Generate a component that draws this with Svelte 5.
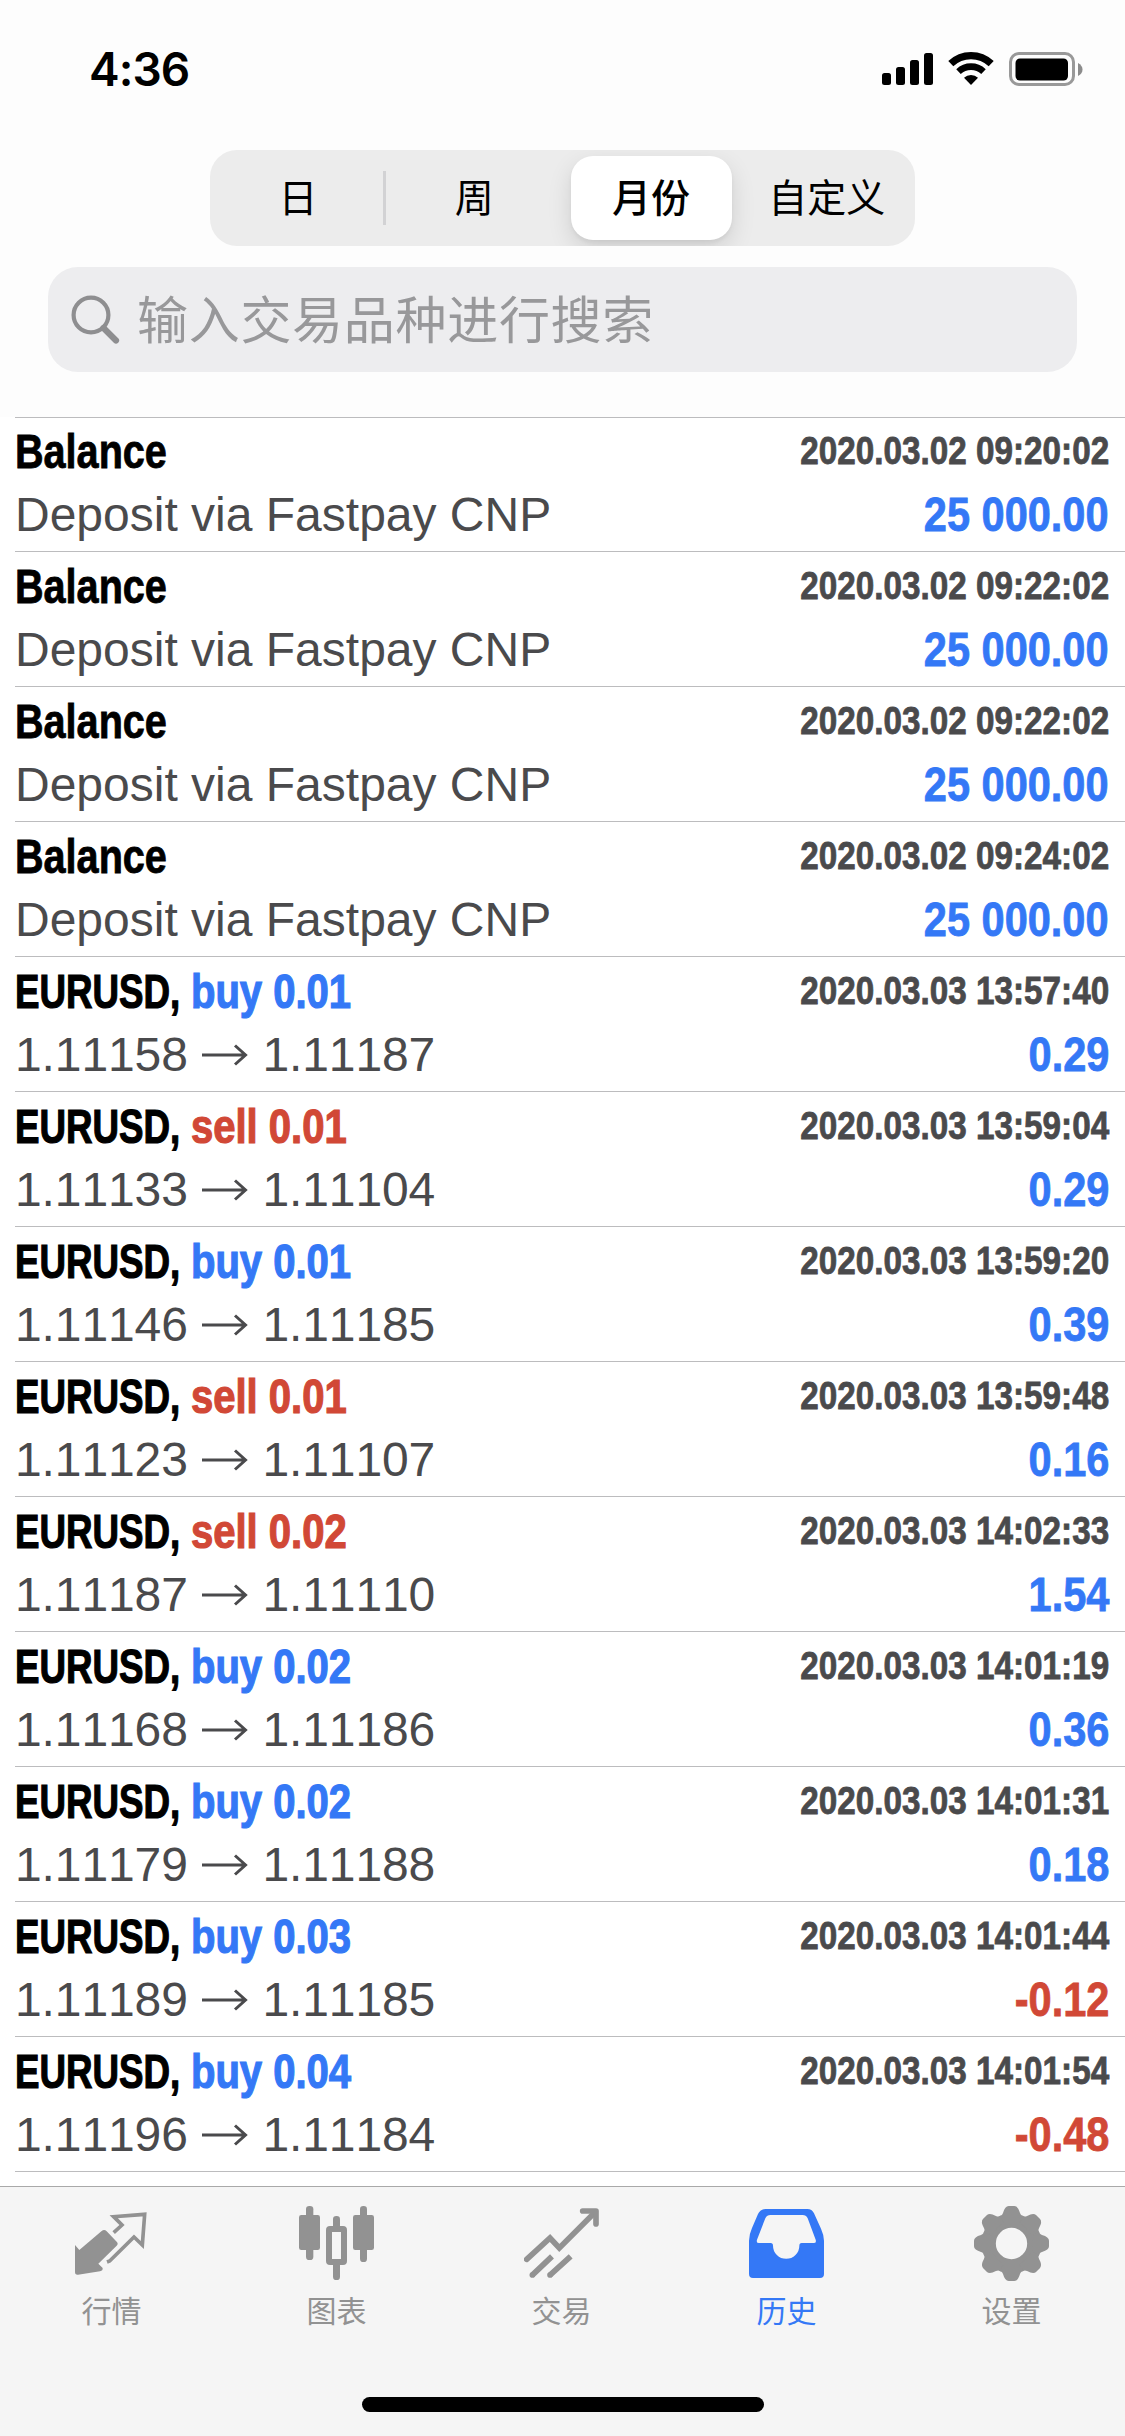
<script lang="ts">
  type Row = { symbol: string; side?: string; lots?: string; from?: string; to?: string; note?: string; time: string; amount: string };

  const deposit = (time: string): Row => ({
    symbol: 'Balance',
    note: 'Deposit via Fastpay CNP',
    time: `2020.03.02 ${time}`,
    amount: '25 000.00',
  });
  const deal = (side: string, lots: string, from: string, to: string, time: string, amount: string): Row => ({
    symbol: 'EURUSD,',
    side,
    lots,
    from,
    to,
    time: `2020.03.03 ${time}`,
    amount,
  });

  const rows: Row[] = [
    deposit('09:20:02'),
    deposit('09:22:02'),
    deposit('09:22:02'),
    deposit('09:24:02'),
    deal('buy', '0.01', '1.11158', '1.11187', '13:57:40', '0.29'),
    deal('sell', '0.01', '1.11133', '1.11104', '13:59:04', '0.29'),
    deal('buy', '0.01', '1.11146', '1.11185', '13:59:20', '0.39'),
    deal('sell', '0.01', '1.11123', '1.11107', '13:59:48', '0.16'),
    deal('sell', '0.02', '1.11187', '1.11110', '14:02:33', '1.54'),
    deal('buy', '0.02', '1.11168', '1.11186', '14:01:19', '0.36'),
    deal('buy', '0.02', '1.11179', '1.11188', '14:01:31', '0.18'),
    deal('buy', '0.03', '1.11189', '1.11185', '14:01:44', '-0.12'),
    deal('buy', '0.04', '1.11196', '1.11184', '14:01:54', '-0.48'),
  ];

  const periods = ['日', '周', '月份', '自定义'];
  const teeth = [0, 45, 90, 135, 180, 225, 270, 315];
  const tabs = [
    { id: 'quotes', label: '行情' },
    { id: 'chart', label: '图表' },
    { id: 'trade', label: '交易' },
    { id: 'history', label: '历史' },
    { id: 'settings', label: '设置' },
  ];

  let period = $state('月份');
  let tab = $state('history');
</script>

<div class="screen">
  <header class="status">
    <span class="clock">4:36</span>
    <svg class="indicators" width="202" height="36" viewBox="0 0 202 36" aria-hidden="true">
      <rect x="1" y="22" width="9" height="12" rx="2.5" />
      <rect x="15" y="16" width="9" height="18" rx="2.5" />
      <rect x="29" y="9" width="9" height="25" rx="2.5" />
      <rect x="43" y="2" width="9" height="32" rx="2.5" />
      <g fill="none" stroke="#000">
        <path stroke-width="7.3" d="M69.800 12.700A29.300 29.300 0 0 1 110.200 12.700" />
        <path stroke-width="6.6" d="M77.500 20.600A18.300 18.300 0 0 1 102.500 20.600" />
      </g>
      <path d="M83 26.800A10.300 10.300 0 0 1 97 26.800L90 34Z" />
      <rect x="129.5" y="2.5" width="63" height="31" rx="8.5" fill="none" stroke="#999" stroke-width="3" />
      <rect x="134.5" y="7.5" width="52.5" height="22" rx="4.5" />
      <path d="M197 12Q201.500 14.500 201.500 18.500T197 25Z" fill="#8c8c8c" />
    </svg>
  </header>

  <div class="segments">
    {#each periods as p, i}
      <button class="segment" class:active={p === period} class:ruled={i === 0} onclick={() => (period = p)}>
        <span>{p}</span>
      </button>
    {/each}
  </div>

  <div class="search">
    <svg width="52" height="52" viewBox="0 0 52 52" aria-hidden="true">
      <circle cx="22" cy="21" r="17.400" />
      <path d="M34.500 34L47 46.500" class="handle" />
    </svg>
    <span>输入交易品种进行搜索</span>
  </div>

  <main class="list">
    {#each rows as row}
      <article class="row">
        <div class="line">
          <h2 class="title" class:pair={row.side}>
            <span>{row.symbol}</span>
            {#if row.side}
              <span class="deal" class:sell={row.side === 'sell'}>{row.side} {row.lots}</span>
            {/if}
          </h2>
          <time>{row.time}</time>
        </div>
        <div class="line">
          {#if row.note}
            <p class="detail">{row.note}</p>
          {:else}
            <p class="detail prices">
              <span>{row.from}</span>
              <svg width="48" height="24" viewBox="0 0 48 24" aria-label="to">
                <path d="M1 12H45M34 2.500L44.500 12L34 21.500" />
              </svg>
              <span>{row.to}</span>
            </p>
          {/if}
          <strong class="amount" class:loss={row.amount.startsWith('-')}>{row.amount}</strong>
        </div>
      </article>
    {/each}
  </main>

  <footer class="bar">
    <nav class="tabs">
      {#each tabs as t}
        <button class="tab" class:current={t.id === tab} onclick={() => (tab = t.id)}>
          <svg width="75" height="75" viewBox="0 0 225 225" aria-hidden="true">
            {#if t.id === 'quotes'}
              <path d="M3 117L16 132L83 75Q91 68 98 76L128 107Q134 113 128 119L73 173L86 186Q87 194 78 196L12 206Q3 207 3 198Z" />
              <path class="stroke" stroke-width="11" d="M119 80L144 57L119 32L212 25L205 117L180 93L107 165L99 168" />
            {:else if t.id === 'chart'}
              <rect x="21" y="0" width="22" height="162" rx="10" />
              <rect x="0" y="27" width="63" height="105" rx="7" />
              <rect x="183" y="0" width="21" height="168" rx="10" />
              <rect x="162" y="27" width="63" height="105" rx="7" />
              <rect x="102" y="30" width="21" height="45" rx="10" />
              <rect x="102" y="165" width="21" height="57" rx="10" />
              <rect class="stroke" stroke-width="18" x="90" y="69" width="45" height="99" rx="3" />
            {:else if t.id === 'trade'}
              <g class="stroke" stroke-width="17">
                <path stroke-linecap="round" d="M8 160L78 96L106 126L213 19" />
                <path stroke-linecap="round" stroke-linejoin="round" d="M176 15H216V54" />
                <path d="M24 208L84 151M77 208L140 151" />
              </g>
              <circle cx="25" cy="207" r="8.500" />
              <circle cx="78" cy="207" r="8.500" />
            {:else if t.id === 'history'}
              <path
                fill-rule="evenodd"
                d="M50 9H175Q189 9 195 22L216 68Q225 88 225 104V204Q225 216 213 216H12Q0 216 0 204V104Q0 86 9 66L27 24Q34 9 50 9ZM64 27Q54 27 49 37L24 101Q21 111 30 111H65Q72 111 72 119A39.500 39.500 0 0 0 151 119Q151 111 158 111H194Q203 111 200 101L176 37Q171 27 161 27Z"
              />
            {:else}
              <circle class="stroke" stroke-width="42" cx="112.500" cy="112.500" r="68" />
              {#each teeth as angle}
                <path
                  transform="rotate({angle} 112.500 112.500)"
                  d="M76 30Q84 30 87 21Q93 0 104 0H121Q132 0 138 21Q141 30 149 30L136 50H89Z"
                />
              {/each}
            {/if}
          </svg>
          <span>{t.label}</span>
        </button>
      {/each}
    </nav>
    <div class="home"></div>
  </footer>
</div>

<style>
  :global(body) {
    margin: 0;
    background: #fff;
  }
  .screen {
    width: 1125px;
    height: 2436px;
    display: flex;
    flex-direction: column;
    overflow: hidden;
    background: #fdfdfd;
    color: #000;
    font-family: 'Liberation Sans', 'Noto Sans CJK SC', sans-serif;
    font-kerning: none;
  }
  button {
    margin: 0;
    padding: 0;
    border: 0;
    background: none;
    color: inherit;
    font: inherit;
  }
  svg {
    display: block;
    flex: none;
  }
  .status {
    height: 150px;
    box-sizing: border-box;
    padding: 39px 42px 0 89px;
    display: flex;
    justify-content: space-between;
    align-items: flex-start;
  }
  .clock {
    font: 600 46px/60px Inter, sans-serif;
    letter-spacing: -0.9px;
  }
  .indicators {
    margin-top: 12px;
  }
  .segments {
    width: 705px;
    height: 96px;
    margin: 0 auto;
    display: grid;
    grid-template-columns: repeat(4, 1fr);
    border-radius: 27px;
    background: #ececec;
    overflow: hidden;
    flex: none;
  }
  .segment {
    display: flex;
    align-items: center;
    justify-content: center;
    padding: 6px;
    font: 400 39px/79px 'Noto Sans CJK SC', sans-serif;
  }
  .segment span {
    flex: 1;
    height: 84px;
    border-radius: 22px;
  }
  .segment.active {
    padding: 6px 7px 6px 8px;
  }
  .segment.active span {
    background: #fff;
    font-weight: 500;
    box-shadow: 0 9px 24px rgba(0, 0, 0, 0.12), 0 3px 4px rgba(0, 0, 0, 0.05);
  }
  .segment.ruled {
    background: linear-gradient(#d2d2d4, #d2d2d4) right center / 3px 54px no-repeat;
  }
  .search {
    height: 105px;
    margin: 21px 48px 45px;
    box-sizing: border-box;
    padding: 0 21px;
    display: flex;
    align-items: center;
    gap: 16px;
    border-radius: 30px;
    background: #ededef;
    color: #98989a;
    font: 400 51px/100px 'Noto Sans CJK SC', sans-serif;
    letter-spacing: 0.7px;
    flex: none;
  }
  .search span {
    height: 105px;
  }
  .search svg {
    fill: none;
    stroke: #8e8e90;
    stroke-width: 4.2;
  }
  .search .handle {
    stroke-width: 6.2;
    stroke-linecap: round;
  }
  .list {
    flex: none;
    height: 1769px;
    background: #fff;
  }
  .row {
    height: 135px;
    box-sizing: border-box;
    margin-left: 15px;
    padding: 3px 16px 0 0;
    border-bottom: 1px solid #bcbcbe;
  }
  .row:first-child {
    box-shadow: inset 0 1px #bcbcbe;
  }
  .line {
    height: 63px;
    display: flex;
    justify-content: space-between;
    line-height: 63px;
    white-space: nowrap;
  }
  /* Bold text is condensed horizontally, each kind to its own width. */
  .title,
  time,
  .amount {
    font-weight: 700;
    -webkit-text-stroke: 0.8px currentColor;
  }
  .title {
    margin: 0;
    display: flex;
    gap: 14px;
    font-size: 48px;
    transform: scaleX(0.825);
    transform-origin: left;
  }
  .title.pair {
    transform: scaleX(0.765);
    -webkit-text-stroke-width: 1.2px;
  }
  .deal {
    color: #3478f6;
    transform: scaleX(1.09);
    transform-origin: left;
  }
  .deal.sell,
  .amount.loss {
    color: #d14836;
  }
  time {
    color: #4a4a4c;
    font-size: 39px;
    line-height: 61px;
    transform: scaleX(0.853);
    transform-origin: right;
  }
  .detail {
    margin: 0;
    color: #4a4a4c;
    font-size: 48px;
  }
  .prices {
    display: flex;
    align-items: center;
    gap: 13.3px;
    letter-spacing: -0.1px;
  }
  .detail svg {
    fill: none;
    stroke: #4a4a4c;
    stroke-width: 3;
  }
  .amount {
    color: #3478f6;
    font-size: 48px;
    transform: scaleX(0.865);
    transform-origin: right;
  }
  .bar {
    flex: 1;
    box-sizing: border-box;
    border-top: 1px solid #a9a9a9;
    background: #f5f5f5;
    display: flex;
    flex-direction: column;
    align-items: center;
    justify-content: space-between;
    padding-bottom: 24px;
  }
  .tabs {
    width: 1125px;
    display: grid;
    grid-template-columns: repeat(5, 1fr);
    padding-top: 19px;
  }
  .tab {
    display: flex;
    flex-direction: column;
    align-items: center;
    padding-right: 2px;
    gap: 6px;
    color: #929292;
    font: 400 30px/44px 'Noto Sans CJK SC', sans-serif;
  }
  .tab svg {
    fill: currentColor;
  }
  .tab .stroke {
    fill: none;
    stroke: currentColor;
  }
  .tab.current {
    color: #3478f6;
  }
  .home {
    width: 402px;
    height: 15px;
    border-radius: 8px;
    background: #000;
  }
</style>
